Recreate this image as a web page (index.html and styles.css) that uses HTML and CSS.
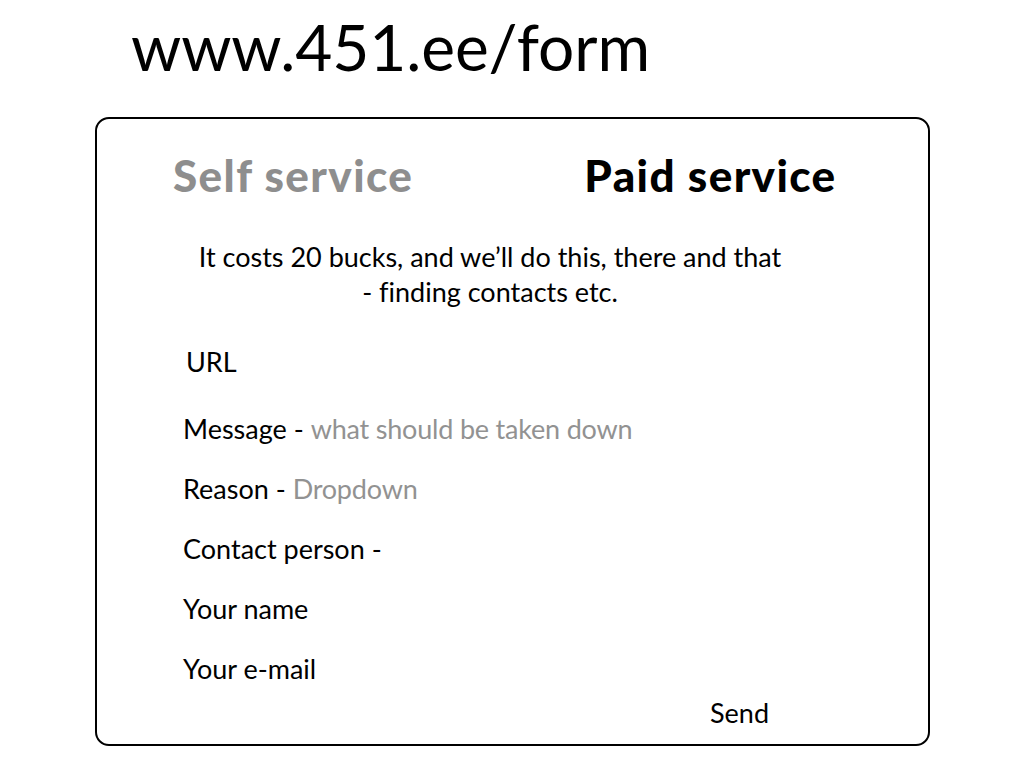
FILE: index.html
```html
<!DOCTYPE html>
<html>
<head>
<meta charset="utf-8">
<link rel="stylesheet" href="styles.css">
</head>
<body>
<h1 class="title">www.451.ee/form</h1>
<div class="card">
  <div class="tabs">
    <div class="tab tab-self">Self service</div>
    <div class="tab tab-paid">Paid service</div>
  </div>
  <p class="intro">It costs 20 bucks, and we’ll do this, there and that<br>- finding contacts etc.</p>
  <div class="fields">
    <div class="field field-url">URL</div>
    <div class="field">Message - <span class="hint">what should be taken down</span></div>
    <div class="field">Reason - <span class="hint">Dropdown</span></div>
    <div class="field">Contact person -</div>
    <div class="field">Your name</div>
    <div class="field">Your e-mail</div>
  </div>
  <div class="send">Send</div>
</div>
</body>
</html>
```
FILE: styles.css
```css
* { box-sizing: border-box; }
html, body { margin: 0; padding: 0; background: #fff; }
body {
  font-family: "Lato", "Open Sans", sans-serif;
  font-variant-ligatures: none;
  color: #000;
  width: 1024px;
  height: 768px;
  overflow: hidden;
}
.title {
  margin: 0;
  padding: 7px 0 0 131px;
  height: 117px;
  font-weight: 400;
  font-size: 64px;
  line-height: 80px;
  letter-spacing: -0.1px;
}
.card {
  margin-left: 95px;
  width: 835px;
  height: 629px;
  border: 2px solid #000;
  border-radius: 14px;
  padding-top: 31px;
}
.tabs {
  display: flex;
  height: 50px;
  align-items: center;
}
.tab {
  font-weight: 900;
  font-size: 44px;
  line-height: 50px;
  letter-spacing: 1.4px;
  white-space: nowrap;
}
.tab-self { color: #8e8e8e; margin-left: 76px; }
.tab-paid { color: #000; margin-left: 171px; }
.intro {
  margin: 39px 0 0 0;
  padding-right: 45px;
  text-align: center;
  font-size: 27px;
  line-height: 35px;
}
.fields {
  margin-top: 23px;
  padding-left: 86px;
}
.field {
  font-size: 27px;
  line-height: 60px;
}
.field-url { padding-left: 3px; margin-bottom: 7px; }
.hint { color: #929292; letter-spacing: -0.2px; }
.send {
  margin: -1px 0 0 613px;
  font-size: 27px;
  line-height: 30px;
}
```
